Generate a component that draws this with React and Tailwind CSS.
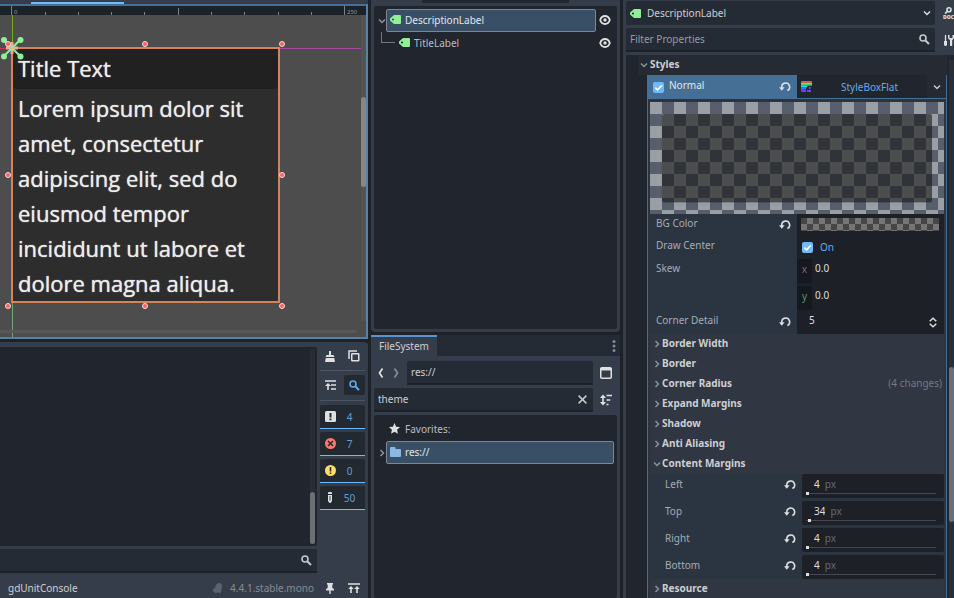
import React from "react";

function TagIcon() {
  return (
    <svg className="shrink-0" width="11" height="9" viewBox="0 0 11 9" aria-hidden="true">
      <path fillRule="evenodd" fill="#8eef97" d="M4 0h6a1 1 0 0 1 1 1v7a1 1 0 0 1-1 1H4L0 5.4V3.6zM3 3.4a1.1 1.1 0 1 0 0 2.2 1.1 1.1 0 0 0 0-2.2z" />
    </svg>
  );
}

function Chevron({ dir = "right", color = "#8d929a", size = 8, width = 1.5 }) {
  const paths = {
    right: "M2.5 1 5.5 4 2.5 7",
    left: "M5.5 1 2.5 4 5.5 7",
    down: "M1 2.5 4 5.5 7 2.5",
  };
  return (
    <svg className="pointer-events-none shrink-0" width={size} height={size} viewBox="0 0 8 8" fill="none" stroke={color} strokeWidth={width} aria-hidden="true">
      <path d={paths[dir]} />
    </svg>
  );
}

function AngleIcon({ dir, color }) {
  return (
    <svg width="6" height="10" viewBox="0 0 6 10" fill="none" stroke={color} strokeWidth="1.7" aria-hidden="true">
      <path d={dir === "left" ? "M4.5 .5 1.5 5l3 4.500" : "M1.500 .5 4.500 5l-3 4.500"} />
    </svg>
  );
}

function EyeIcon() {
  return (
    <svg width="12" height="10" viewBox="0 0 12 10" aria-hidden="true">
      <path fill="none" stroke="#e0e0e0" strokeWidth="1.800" d="M1.200 5C2 2.400 3.700 1 6 1s4 1.400 4.800 4C10 7.600 8.300 9 6 9S2 7.600 1.200 5z" />
      <circle cx="6" cy="5" r="1.700" fill="#e0e0e0" />
    </svg>
  );
}

function SearchIcon({ color = "#c4c7cb" }) {
  return (
    <svg className="shrink-0" width="11" height="11" viewBox="0 0 11 11" fill="none" stroke={color} aria-hidden="true">
      <circle cx="4" cy="4" r="3" strokeWidth="1.600" />
      <path d="m6.200 6.200 3.800 3.800" strokeWidth="2" />
    </svg>
  );
}

function RevertIcon() {
  return (
    <svg width="12" height="10" viewBox="0 0 12 10" aria-hidden="true">
      <path fill="none" stroke="#dcdee0" strokeWidth="1.600" d="M2.800 6V5a3.900 3.900 0 1 1 5.600 3.500" />
      <path fill="#dcdee0" d="M0 5.200h5.600L2.800 8.800z" />
    </svg>
  );
}

function RevertButton({ label }) {
  return (
    <button type="button" aria-label={`Reset ${label}`} className="flex h-[22px] w-3 shrink-0 items-center">
      <RevertIcon />
    </button>
  );
}

const handles = [
  "left-[5px] top-[26px]",
  "left-[142px] top-[26px]",
  "left-[279px] top-[26px]",
  "left-[5px] top-[157px]",
  "left-[279px] top-[157px]",
  "left-[5px] top-[288px]",
  "left-[142px] top-[288px]",
  "left-[279px] top-[288px]",
];

function Ruler() {
  const minor = [45, 78, 111, 144, 211, 244, 278, 311];
  return (
    <div className="relative h-[9px] overflow-hidden bg-[#1d2229] text-[6px] leading-[6px] text-[#8f9499]">
      <svg className="block h-full w-full" aria-hidden="true">
        <g fill="#7d8288">
          <rect x="11" y="0" width="1" height="9" />
          <rect x="178" y="2" width="1" height="7" />
          <rect x="344" y="0" width="1" height="9" />
          {minor.map((x) => (
            <rect key={x} x={x} y="6" width="1" height="3" />
          ))}
        </g>
      </svg>
      <span className="absolute left-[14px] top-[3px]">0</span>
      <span className="absolute left-[347px] top-[3px]">250</span>
    </div>
  );
}

function Canvas() {
  return (
    <div className="relative h-[322px] overflow-hidden bg-[#4d4d4d] font-['Open_Sans','Noto_Sans',sans-serif]">
      <div className="absolute left-3 top-0 h-8 w-px bg-[#76b010]" />
      <div className="absolute bottom-0 left-3 h-[35px] w-px bg-[#72a877]" />
      <div className="absolute left-0 top-[33px] h-px w-3 bg-[#c8394f]" />
      <div className="absolute left-[280px] right-0 top-[33px] h-px bg-[#a8479c]" />
      <div className="absolute left-[11px] top-8 flex h-[256px] w-[269px] flex-col border-2 border-[#d6835a] bg-[#2d2d2d] text-[22px] font-medium text-[#ececec] [text-shadow:0_0_1px_#ececec]">
        <p className="h-10 rounded-b-sm bg-[#212121] pl-[5px] leading-[39px]">Title Text</p>
        <p className="whitespace-pre pl-[5px] pt-[2px] leading-[35px]">
          {"Lorem ipsum dolor sit\namet, consectetur\nadipiscing elit, sed do\neiusmod tempor\nincididunt ut labore et\ndolore magna aliqua."}
        </p>
      </div>
      <svg className="absolute left-0 top-[21px]" width="24" height="24" viewBox="0 0 24 24" aria-hidden="true">
        <path stroke="#f2a79c" strokeWidth="3" d="M6 12h12M12 6v12" />
        <path stroke="#8eef97" strokeWidth="2" d="m4 4 16 16M20 4 4 20" />
        <g fill="#8eef97">
          <circle cx="4" cy="4" r="3" />
          <circle cx="20.500" cy="4" r="3" />
          <circle cx="4" cy="20.500" r="3" />
          <circle cx="20.500" cy="20.500" r="3" />
        </g>
        <circle cx="12" cy="12" r="2.500" fill="#c9c79f" />
      </svg>
      {handles.map((place) => (
        <span key={place} className={`absolute size-[6px] rounded-full border border-[#f4dcd9] bg-[#ff5f5f] ${place}`} />
      ))}
      <div className="absolute bottom-4 right-0 top-0 w-[5px] bg-[#535353]">
        <div className="mt-[82px] h-[90px] rounded-sm bg-[#868686]" />
      </div>
      <div className="absolute bottom-1 left-0 right-[10px] h-[3px] rounded-sm bg-[#585858]" />
    </div>
  );
}

function Counter({ label, value, children }) {
  return (
    <button type="button" aria-label={`${label}: ${value}`} className="flex h-6 w-[45px] items-center rounded-t-xs border-b border-[#70bafa] bg-[#222931] pl-1 text-[#5f9fd8]">
      <span className="flex w-3 justify-center">{children}</span>
      <span className="flex-1 pr-[2px] text-center">{value}</span>
    </button>
  );
}

function OutputPanel() {
  return (
    <section className="flex min-h-0 flex-1 flex-col rounded-tr-sm bg-[#363d4a]">
      <div className="flex flex-1">
        <div className="flex min-w-0 flex-1 flex-col gap-[3px] pt-[5px]">
          <div className="flex flex-1 justify-end rounded-r-xs bg-[#21252e] p-[2px]">
            <div className="flex w-[5px] flex-col justify-end bg-[#282c35]">
              <div className="h-[52px] rounded-sm bg-[#6c6f75]" />
            </div>
          </div>
          <div className="flex h-6 items-center border-b-2 border-[#1d2229] bg-[#252b34] pr-[5px]">
            <input aria-label="Filter messages" className="min-w-0 flex-1 bg-transparent pl-2 outline-none" />
            <SearchIcon />
          </div>
        </div>
        <div className="flex w-[51px] flex-col gap-[3px] pl-[3px] pr-[3px]">
          <div className="flex h-[29px] items-center justify-between border-b border-[#4d5460] pl-[5px] pr-[5px]">
            <button type="button" aria-label="Clear output">
              <svg width="10" height="11" viewBox="0 0 10 11" fill="#e0e0e0" aria-hidden="true">
                <path d="M4 0h2v4h2.500L9.500 6h-9L1.500 4H4zM.8 7h8.400L10 11H0z" />
              </svg>
            </button>
            <button type="button" aria-label="Copy selection">
              <svg width="12" height="12" viewBox="0 0 12 12" fill="none" stroke="#e0e0e0" strokeWidth="1.500" aria-hidden="true">
                <path d="M1 9V1h8" />
                <rect x="3.750" y="3.750" width="7" height="7" rx=".5" />
              </svg>
            </button>
          </div>
          <div className="flex h-[27px] justify-between border-b border-[#4d5460] pt-px">
            <button type="button" aria-label="Collapse duplicates" className="flex h-5 w-5 items-center justify-center">
              <svg width="11" height="10" viewBox="0 0 11 10" aria-hidden="true">
                <path stroke="#e0e0e0" strokeWidth="1.600" d="M0 1h11M6 5h5M6 9h5M3 4.500V10" />
                <path fill="#e0e0e0" d="M0 6h6L3 3z" />
              </svg>
            </button>
            <button type="button" aria-label="Toggle search" className="flex h-5 w-[21px] items-center justify-center rounded-xs bg-[#222931]">
              <SearchIcon color="#64aaec" />
            </button>
          </div>
          <div className="flex flex-col gap-[3px] pt-px">
            <Counter label="Messages" value="4">
              <svg width="11" height="11" viewBox="0 0 11 11" aria-hidden="true">
                <rect width="11" height="11" rx="1.500" fill="#e0e0e0" />
                <path fill="#222931" d="M4.500 2h2v4.500h-2zM4.500 7.500h2v1.700h-2z" />
              </svg>
            </Counter>
            <Counter label="Errors" value="7">
              <svg width="11" height="11" viewBox="0 0 11 11" aria-hidden="true">
                <circle cx="5.500" cy="5.500" r="5.500" fill="#ff786b" />
                <path stroke="#222931" strokeWidth="1.500" d="m3 3 5 5M8 3 3 8" />
              </svg>
            </Counter>
            <Counter label="Warnings" value="0">
              <svg width="11" height="11" viewBox="0 0 11 11" aria-hidden="true">
                <circle cx="5.500" cy="5.500" r="5.500" fill="#ffdd65" />
                <path fill="#222931" d="M4.700 2h1.600v4.500H4.700zM4.700 7.500h1.600v1.600H4.700z" />
              </svg>
            </Counter>
            <Counter label="Editor messages" value="50">
              <svg width="6" height="11" viewBox="0 0 6 11" aria-hidden="true">
                <path fill="#e0e0e0" d="M1 1a1 1 0 0 1 1-1h2a1 1 0 0 1 1 1v1H1zM1 3h4v6L3.500 11h-1L1 9z" />
                <path fill="#222931" d="M2.600 4h.8v4.500h-.8z" />
              </svg>
            </Counter>
          </div>
        </div>
      </div>
      <footer className="flex h-[25px] items-center gap-2 pl-2 pr-2 pt-[5px]">
        <button type="button" className="text-[#cdcfd2]">gdUnitConsole</button>
        <span className="flex-1" />
        <svg width="10" height="11" viewBox="0 0 10 11" fill="#5d636e" aria-hidden="true">
          <path d="M7 0a3 3 0 0 1 3 3l-1 7L5 9.500a1.800 1.800 0 0 1-3-.7L0 7.500l3-2.800C3.800 2 4.500.2 7 0z" />
        </svg>
        <button type="button" className="text-[#868b93]">4.4.1.stable.mono</button>
        <button type="button" aria-label="Pin bottom panel" className="ml-1">
          <svg width="8" height="11" viewBox="0 0 8 11" fill="#e0e0e0" aria-hidden="true">
            <path d="M1 0h6v1.500H6.300V5L8 6v1.500H4.700V11H3.300V7.500H0V6l1.700-1V1.500H1z" />
          </svg>
        </button>
        <button type="button" aria-label="Expand bottom panel" className="ml-[6px]">
          <svg width="12" height="10" viewBox="0 0 12 10" aria-hidden="true">
            <path stroke="#e0e0e0" strokeWidth="1.600" d="M0 1h12M3 5v5M9 5v5" />
            <path fill="#e0e0e0" d="M.3 6 3 3l2.700 3zM6.300 6 9 3l2.700 3z" />
          </svg>
        </button>
      </footer>
    </section>
  );
}

function SceneDock() {
  return (
    <section className="flex h-[332px] flex-col rounded-b-sm bg-[#363d4a] px-[3px] pb-[3px]">
      <div className="mb-[3px] ml-12 h-[3px] w-[147px] bg-[#222830]" />
      <div className="flex-1 rounded-xs bg-[#21252e] pt-[3px]">
        <div className="flex h-[23px] items-center">
          <span className="flex w-3 justify-end">
            <Chevron dir="down" />
          </span>
          <button type="button" className="flex h-full flex-1 items-center gap-1 rounded-xs border border-[#7d8794] bg-[#384f66] pb-[2px] pl-[3px] text-[#e2e6ea]">
            <TagIcon />
            DescriptionLabel
          </button>
          <button type="button" aria-label="Toggle DescriptionLabel visibility" className="flex w-[21px] pb-px pl-[3px]">
            <EyeIcon />
          </button>
        </div>
        <div className="flex h-[23px]">
          <span className="ml-[7px] h-[11px] w-[14px] border-b border-l border-[#737881]" />
          <button type="button" className="flex flex-1 items-center gap-1 pb-[2px] pl-1 text-[#b9bcc1]">
            <TagIcon />
            TitleLabel
          </button>
          <button type="button" aria-label="Toggle TitleLabel visibility" className="flex w-[21px] items-center pb-px pl-[3px]">
            <EyeIcon />
          </button>
        </div>
      </div>
    </section>
  );
}

function FileSystemDock() {
  const field = "flex h-6 min-w-0 flex-1 items-center rounded-t-xs border-b-2 border-[#1d2229] bg-[#252b34] text-[#cdcfd2]";
  return (
    <section className="flex min-h-0 flex-1 flex-col bg-[#363d4a]">
      <div className="flex h-[21px] items-center justify-between bg-[#252b34] pr-1">
        <button type="button" className="h-full border-t-2 border-[#5b95cf] bg-[#363d4a] px-2 pb-[2px] text-[#cdcfd2]">
          FileSystem
        </button>
        <button type="button" aria-label="Dock options">
          <svg width="4" height="12" viewBox="0 0 4 12" fill="#868b93" aria-hidden="true">
            <circle cx="2" cy="1.600" r="1.500" />
            <circle cx="2" cy="6" r="1.500" />
            <circle cx="2" cy="10.400" r="1.500" />
          </svg>
        </button>
      </div>
      <div className="flex min-h-0 flex-1 flex-col gap-[3px] px-[3px] pt-[5px]">
        <div className="flex items-center">
          <div className="flex w-[33px] gap-[9px] pl-1">
            <button type="button" aria-label="Back">
              <AngleIcon dir="left" color="#e0e0e0" />
            </button>
            <button type="button" aria-label="Forward">
              <AngleIcon dir="right" color="#868b93" />
            </button>
          </div>
          <div className={field}>
            <input aria-label="Path" defaultValue="res://" className="w-full bg-transparent px-1 outline-none" />
          </div>
          <button type="button" aria-label="Change split mode" className="flex w-6 pl-[7px]">
            <svg width="12" height="12" viewBox="0 0 12 12" aria-hidden="true">
              <rect x=".75" y=".75" width="10.500" height="10.500" rx="1" fill="none" stroke="#e0e0e0" strokeWidth="1.500" />
              <path fill="#e0e0e0" d="M0 1h12v2.500H0z" />
            </svg>
          </button>
        </div>
        <div className="flex items-center">
          <div className={field}>
            <input aria-label="Filter files" defaultValue="theme" className="min-w-0 flex-1 bg-transparent px-1 outline-none" />
            <button type="button" aria-label="Clear filter" className="px-1.5">
              <svg width="9" height="9" viewBox="0 0 9 9" stroke="#c4c7cb" strokeWidth="1.500" aria-hidden="true">
                <path d="m.6.6 7.800 7.800M8.400.6.6 8.400" />
              </svg>
            </button>
          </div>
          <button type="button" aria-label="Sort files" className="flex w-6 pl-[7px]">
            <svg width="12" height="12" viewBox="0 0 12 12" aria-hidden="true">
              <path stroke="#e0e0e0" strokeWidth="1.600" d="M3 3v6M6.500 1.500H12M6.500 6h3.800M6.500 10.500h2" />
              <path fill="#e0e0e0" d="M0 4 3 .5 6 4zM0 8h6l-3 3.500z" />
            </svg>
          </button>
        </div>
        <div className="flex-1 rounded-xs bg-[#21252e] pr-[3px] pt-[3px]">
          <button type="button" className="flex h-[23px] items-center gap-[5px] pb-[2px] pl-[15px] text-[#b9bcc1]">
            <svg width="11" height="11" viewBox="0 0 11 11" fill="#e0e0e0" aria-hidden="true">
              <path d="m5.500 0 1.600 3.700 3.900.4-2.900 2.700.8 4-3.400-2-3.400 2 .8-4L0 4.100l3.900-.4z" />
            </svg>
            Favorites:
          </button>
          <div className="flex h-[23px] items-center">
            <span className="flex w-3 justify-end">
              <Chevron />
            </span>
            <button type="button" className="flex h-full flex-1 items-center gap-1 rounded-xs border border-[#7d8794] bg-[#384f66] pb-[2px] pl-[3px] text-[#e2e6ea]">
              <svg width="11" height="10" viewBox="0 0 11 10" fill="#8bb8e0" aria-hidden="true">
                <path d="M1 0h3.500a1 1 0 0 1 1 1v1H10a1 1 0 0 1 1 1v6a1 1 0 0 1-1 1H1a1 1 0 0 1-1-1V1a1 1 0 0 1 1-1z" />
              </svg>
              res://
            </button>
          </div>
        </div>
      </div>
    </section>
  );
}

function Tick({ id, label }) {
  return (
    <span className="grid size-[11px] shrink-0">
      <input id={id} type="checkbox" defaultChecked aria-label={label} className="col-start-1 row-start-1 size-[11px] appearance-none rounded-xs bg-[#70bafa]" />
      <svg className="pointer-events-none col-start-1 row-start-1" width="11" height="11" viewBox="0 0 11 11" fill="none" stroke="#fff" strokeWidth="1.600" aria-hidden="true">
        <path d="m2.300 5.600 2.200 2.200L9 3.200" />
      </svg>
    </span>
  );
}

function PropRow({ label, htmlFor, revert, height, children }) {
  return (
    <div className={`flex ${height}`}>
      <div className="flex flex-1 items-start justify-between pl-[6px] pr-[6px]">
        <label htmlFor={htmlFor} className="leading-[18px] text-[#a6abb2]">{label}</label>
        {revert && <RevertButton label={label} />}
      </div>
      <div className="w-[147px] bg-[#1d2127]">{children}</div>
    </div>
  );
}

function AxisField({ axis, color }) {
  return (
    <div className="flex h-6">
      <label htmlFor={`skew-${axis}`} className={`w-[15px] rounded-xs bg-[#15181e] text-center leading-5 ${color}`}>{axis}</label>
      <input id={`skew-${axis}`} defaultValue="0.0" className="h-[18px] min-w-0 flex-1 bg-transparent pl-[3px] text-[#dcdee0] outline-none" />
    </div>
  );
}

function Section({ title, note, open }) {
  return (
    <button type="button" aria-expanded={!!open} className="flex h-5 w-full items-center gap-px bg-[#303642] pl-[3px] pr-[2px] font-bold text-[#cdcfd2]">
      <Chevron dir={open ? "down" : "right"} />
      <span className="pb-[2px]">{title}</span>
      {note && <span className="ml-auto pb-[2px] font-normal text-[#747982]">{note}</span>}
    </button>
  );
}

function MarginRow({ label, value }) {
  const id = `margin-${label.toLowerCase()}`;
  return (
    <div className="flex h-6 pl-[15px]">
      <label htmlFor={id} className="flex-1 leading-5 text-[#a6abb2]">{label}</label>
      <RevertButton label={label} />
      <div className="ml-[6px] flex w-[142px] flex-col rounded-xs bg-[#1d2127] px-1">
        <div className="flex h-[18px] gap-[5px] pl-2 pt-[2px]">
          <input id={id} defaultValue={value} className="field-sizing-content bg-transparent text-[#dcdee0] outline-none" />
          <span className="text-[#656a72]">px</span>
        </div>
        <input
          type="range"
          aria-label={`${label} margin`}
          min="0"
          max="2000"
          defaultValue={value}
          className="mr-1 h-[3px] appearance-none bg-[linear-gradient(#45494f,#45494f)] bg-size-[100%_1px] bg-center bg-no-repeat [&::-webkit-slider-thumb]:size-[3px] [&::-webkit-slider-thumb]:appearance-none [&::-webkit-slider-thumb]:bg-[#dcdee0]"
        />
      </div>
    </div>
  );
}

function StyleBoxEditor() {
  return (
    <div className="ml-[21px] border-x border-[#466f95] bg-[#2b3542]">
      <div className="flex h-6 border-b border-[#466f95] bg-[#21252e]">
        <div className="-mb-px flex flex-1 items-center bg-[#466f95] pl-[5px] pr-[6px] text-[#e2e6ea]">
          <Tick id="normal" />
          <label htmlFor="normal" className="flex-1 pb-1 pl-[5px]">Normal</label>
          <RevertButton label="Normal" />
        </div>
        <button type="button" className="flex w-[130px] items-center pl-1 text-[#68abea]">
          <svg width="11" height="11" viewBox="0 0 11 11" aria-hidden="true">
            <path fill="#f0506a" d="M0 1a1 1 0 0 1 1-1h9a1 1 0 0 1 1 1v.8H0z" />
            <path fill="#b9c94f" d="M0 1.800h11v1.300H0z" />
            <path fill="#4fe06a" d="M0 3.100h11v1.500H0z" />
            <path fill="#20d8e0" d="M0 4.600h7L5.500 6.500H0z" />
            <path fill="#2a7bff" d="M0 6.500h5.500L5 8.500H0zM8 6h1.500v2H8z" />
            <path fill="#7a3cff" d="M0 8.500h5V11H1a1 1 0 0 1-1-1zM6 9h4v2H6z" />
          </svg>
          <span className="flex-1 text-center">StyleBoxFlat</span>
        </button>
        <button type="button" aria-label="Resource options" className="flex w-[19px] items-center justify-center bg-[#252a33]">
          <Chevron dir="down" color="#c4c7cb" />
        </button>
      </div>
      <div className="px-[2px] pt-[3px]">
        <div className="h-[112px] bg-[repeating-conic-gradient(#565f6b_0_25%,#9a9fa6_0_50%)] bg-size-[24px_24px] p-3">
          <div className="h-[88px] rounded-xs bg-[#171716]/60 shadow-[0_1px_1px_rgba(0,0,0,0.2)]" />
        </div>
        <PropRow label="BG Color" htmlFor="bg-color" revert height="h-[22px]">
          <button id="bg-color" type="button" aria-label="BG Color" className="mx-1 mt-1 block h-[13px] w-[138px] bg-[repeating-conic-gradient(#757575_0_25%,#464646_0_50%)] bg-size-[12px_12px]" />
        </PropRow>
        <PropRow label="Draw Center" htmlFor="draw-center" height="h-[23px]">
          <div className="flex h-[22px] items-center gap-[7px] pl-[5px] text-[#68abea]">
            <Tick id="draw-center" />
            <label htmlFor="draw-center">On</label>
          </div>
        </PropRow>
        <PropRow label="Skew" htmlFor="skew-x" height="h-[52px]">
          <div className="flex flex-col gap-[3px]">
            <AxisField axis="x" color="text-[#8d6660]" />
            <AxisField axis="y" color="text-[#5c9a6c]" />
          </div>
        </PropRow>
        <PropRow label="Corner Detail" htmlFor="corner-detail" revert height="h-[23px]">
          <div className="flex items-center pl-3 pr-[7px]">
            <input id="corner-detail" defaultValue="5" className="h-[18px] min-w-0 flex-1 bg-transparent text-[#dcdee0] outline-none" />
            <svg className="mt-1" width="8" height="11" viewBox="0 0 8 11" fill="none" stroke="#dcdee0" strokeWidth="1.500" aria-hidden="true">
              <path d="m.7 4.200 3.300-3 3.300 3M.7 6.800l3.300 3 3.300-3" />
            </svg>
          </div>
        </PropRow>
        <Section title="Border Width" />
        <Section title="Border" />
        <Section title="Corner Radius" note="(4 changes)" />
        <Section title="Expand Margins" />
        <Section title="Shadow" />
        <Section title="Anti Aliasing" />
        <Section title="Content Margins" open />
        <div className="flex flex-col gap-[3px]">
          <MarginRow label="Left" value="4" />
          <MarginRow label="Top" value="34" />
          <MarginRow label="Right" value="4" />
          <MarginRow label="Bottom" value="4" />
        </div>
        <Section title="Resource" />
      </div>
    </div>
  );
}

function Inspector() {
  return (
    <section className="flex w-[331px] shrink-0 flex-col overflow-hidden bg-[#363d4a] pl-[3px] pt-px">
      <div className="mb-[3px] flex items-center">
        <div className="flex h-6 flex-1 items-center rounded-xs bg-[#252b34] pl-1 pr-1 text-[#cdcfd2]">
          <TagIcon />
          <select aria-label="Edited object" className="h-full flex-1 appearance-none bg-transparent pb-px pl-[6px] outline-none">
            <option>DescriptionLabel</option>
          </select>
          <Chevron dir="down" color="#dcdee0" />
        </div>
        <button type="button" aria-label="Open documentation" className="flex w-[19px] shrink-0 flex-col items-end text-[5px] font-black leading-[6px] text-[#e0e0e0]">
          <svg className="mr-[2px]" width="8" height="7" viewBox="0 0 8 7" fill="none" stroke="#e0e0e0" strokeWidth="1.600" aria-hidden="true">
            <circle cx="5" cy="2.800" r="2" />
            <path d="M3.600 4.200 1 6.600" />
          </svg>
          <span>DOC</span>
        </button>
      </div>
      <div className="mb-[3px] flex items-center">
        <div className="flex h-6 flex-1 items-center rounded-t-xs border-b-2 border-[#1d2229] bg-[#252b34] pr-[5px]">
          <input aria-label="Filter Properties" placeholder="Filter Properties" className="min-w-0 flex-1 bg-transparent pl-1 outline-none placeholder:text-[#969ba2]" />
          <SearchIcon />
        </div>
        <button type="button" aria-label="Manage properties" className="flex w-[19px] justify-end">
          <svg width="11" height="11" viewBox="0 0 11 11" aria-hidden="true">
            <path stroke="#e0e0e0" strokeWidth="1.300" d="M2.500 0v6" />
            <path fill="#e0e0e0" d="M1 6h3v3.500a1.500 1.500 0 0 1-3 0zM5 0v2.500A2.800 2.800 0 0 0 7 5v5a1 1 0 0 0 2.200 0V5A2.800 2.800 0 0 0 11 2.500V0H9.500v3h-3V0z" />
          </svg>
        </button>
      </div>
      <div className="flex min-h-0 flex-1 bg-[#21252e]">
        <div className="min-w-0 flex-1 overflow-hidden">
          <button type="button" aria-expanded="true" className="ml-3 flex h-5 w-[309px] items-center gap-[2px] bg-[#262b33] pl-[2px] font-bold text-[#cdcfd2]">
            <Chevron dir="down" />
            <span className="pb-[2px]">Styles</span>
          </button>
          <StyleBoxEditor />
        </div>
        <div className="ml-[2px] mt-[5px] w-[5px] bg-[#2a2e37] pt-[307px]">
          <div className="h-[155px] rounded-sm bg-[#6c6f75]" />
        </div>
      </div>
    </section>
  );
}

export default function App() {
  return (
    <main className="flex h-screen gap-[3px] overflow-hidden bg-[#1d2229] font-['Noto_Sans','Open_Sans',sans-serif] text-[10px] leading-4">
      <div className="flex min-w-0 flex-1 flex-col gap-[3px]">
        <section>
          <div className="flex h-1 items-end bg-[#363d4a] pl-[31px]">
            <div className="h-[2px] w-[93px] bg-[#70bafa]" />
          </div>
          <div className="border-y-2 border-r-2 border-[#5682a8] border-t-[#446f97]">
            <Ruler />
            <Canvas />
          </div>
        </section>
        <OutputPanel />
      </div>
      <div className="flex w-[249px] shrink-0 flex-col gap-[3px]">
        <SceneDock />
        <FileSystemDock />
      </div>
      <Inspector />
    </main>
  );
}
